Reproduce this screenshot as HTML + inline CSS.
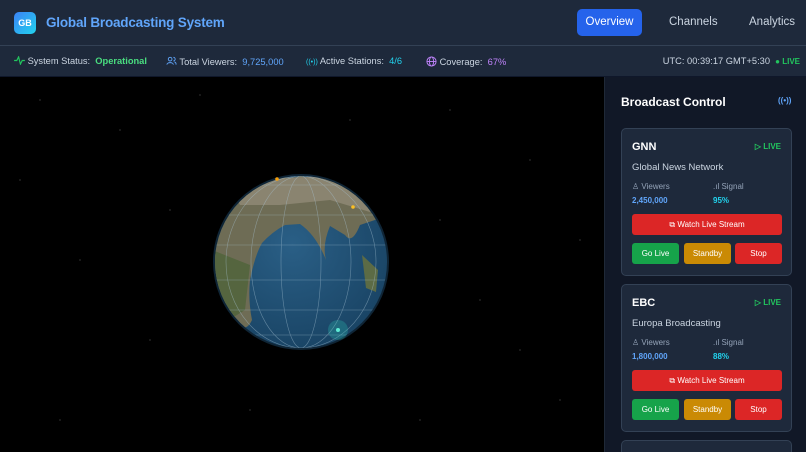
<!DOCTYPE html>
<html><head><meta charset="utf-8"><style>
*{margin:0;padding:0;box-sizing:border-box}
html,body{width:806px;height:452px;overflow:hidden}
body{background:#000;font-family:"Liberation Sans",sans-serif;color:#e5e7eb;position:relative}
.hdr{position:absolute;left:0;top:0;width:806px;height:46px;background:#1e293b;border-bottom:1px solid #334155}
.logo{position:absolute;left:14px;top:12px;width:22px;height:22px;border-radius:5px;background:linear-gradient(135deg,#3b82f6,#22d3ee);color:#fff;font-size:9px;font-weight:bold;text-align:center;line-height:22px}
.title{position:absolute;left:46px;top:15px;font-size:13.5px;font-weight:bold;color:#60a5fa;letter-spacing:-0.2px}
.tab{position:absolute;top:9px;height:27px;line-height:27px;font-size:11.5px;color:#cbd5e1}
.stat{position:absolute;left:0;top:46px;width:806px;height:31px;background:#1e293b;border-bottom:1px solid #0f172a;font-size:9.3px;color:#cbd5e1}
.stat span.i{position:absolute;top:10px;white-space:nowrap}
.main{position:absolute;left:0;top:77px;width:604px;height:375px;background:#000;overflow:hidden}
.side{position:absolute;left:604px;top:77px;width:202px;height:375px;background:#111827;border-left:1px solid #1f2937;overflow:hidden}
.card{position:absolute;left:16px;width:171px;height:148px;background:#1e293b;border:1px solid #334155;border-radius:5px}
.card .n{position:absolute;left:10px;top:12px;font-size:11px;font-weight:bold;color:#fff}
.card .live{position:absolute;right:10px;top:13px;font-size:8px;font-weight:bold;color:#22c55e}
.card .full{position:absolute;left:10px;top:33px;font-size:9.5px;color:#cbd5e1}
.card .lab{position:absolute;top:53px;font-size:8px;color:#94a3b8}
.card .val{position:absolute;top:67px;font-size:8px;font-weight:bold}
.btn{position:absolute;height:21px;border-radius:3px;font-size:8px;color:#fff;text-align:center;line-height:21px}
</style></head><body>
<div class="hdr">
<div class="logo">GB</div>
<div class="title">Global Broadcasting System</div>
<div class="tab" style="left:577px;width:65px;background:#2563eb;color:#fff;border-radius:5px;text-align:center">Overview</div>
<div class="tab" style="left:669px">Channels</div>
<div class="tab" style="left:749px">Analytics</div>
</div>
<div class="stat">
<span class="i" style="left:14px"><svg width="11" height="9" viewBox="0 0 12 10" style="vertical-align:-1px"><path d="M0 5h3l2-4 2 8 2-4h3" fill="none" stroke="#22c55e" stroke-width="1.3"/></svg> System Status: &nbsp;<b style="color:#4ade80">Operational</b></span>
<span class="i" style="left:166px"><svg width="11" height="10" viewBox="0 0 12 10" style="vertical-align:-1px"><circle cx="4.5" cy="3" r="2" fill="none" stroke="#60a5fa"/><path d="M1 9c0-3 7-3 7 0M8 1a2 2 0 010 4M9 6c2 0 2 2 2 3" fill="none" stroke="#60a5fa"/></svg> Total Viewers: &nbsp;<span style="color:#60a5fa">9,725,000</span></span>
<span class="i" style="left:306px"><span style="color:#22d3ee;font-size:7px">((•))</span> Active Stations: &nbsp;<span style="color:#22d3ee">4/6</span></span>
<span class="i" style="left:426px"><svg width="11" height="11" viewBox="0 0 12 12" style="vertical-align:-2px"><circle cx="6" cy="6" r="5" fill="none" stroke="#c084fc"/><ellipse cx="6" cy="6" rx="2.3" ry="5" fill="none" stroke="#c084fc"/><path d="M1 6h10" stroke="#c084fc"/></svg> Coverage: &nbsp;<span style="color:#c084fc">67%</span></span>
<span class="i" style="right:6px">UTC: 00:39:17 GMT+5:30 &nbsp;<span style="color:#22c55e;font-size:8px;font-weight:bold">● LIVE</span></span>
</div>
<div class="main">
<svg width="604" height="375" viewBox="0 77 604 375">
<g fill="#555">
<circle cx="40" cy="100" r=".6"/><circle cx="120" cy="130" r=".6"/><circle cx="200" cy="95" r=".6"/><circle cx="450" cy="110" r=".6"/><circle cx="530" cy="160" r=".6"/><circle cx="80" cy="260" r=".6"/><circle cx="150" cy="340" r=".6"/><circle cx="480" cy="300" r=".6"/><circle cx="560" cy="400" r=".6"/><circle cx="60" cy="420" r=".6"/><circle cx="420" cy="420" r=".6"/><circle cx="250" cy="410" r=".6"/><circle cx="350" cy="120" r=".6"/><circle cx="580" cy="240" r=".6"/><circle cx="20" cy="180" r=".6"/><circle cx="170" cy="210" r=".6"/><circle cx="440" cy="220" r=".6"/><circle cx="520" cy="350" r=".6"/>
</g>
<defs><radialGradient id="g" cx="45%" cy="40%" r="60%"><stop offset="0" stop-color="#2a5f86"/><stop offset="1" stop-color="#1a4566"/></radialGradient>
<clipPath id="c"><circle cx="301" cy="262" r="86"/></clipPath></defs>
<circle cx="301" cy="262" r="88" fill="#1e4a6b" opacity=".5"/>
<circle cx="301" cy="262" r="86" fill="url(#g)"/>
<g clip-path="url(#c)">
<path d="M210 200 L300 176 L390 190 L390 215 L360 225 Q352 245 345 235 L330 226 Q322 245 326 260 Q316 235 300 224 L285 225 Q272 232 262 243 Q255 255 250 280 Q248 300 252 320 Q245 335 235 320 L212 290 Z" fill="#6e6c55"/>
<path d="M225 180 L330 176 Q370 180 390 200 L370 212 L330 200 L280 205 L240 205 Z" fill="#8a8470"/>
<path d="M212 250 L250 265 L245 310 L232 318 L212 290 Z" fill="#55653f"/>
<path d="M362 255 L378 270 L376 292 L366 288 Z" fill="#5c6b45"/>
<g fill="none" stroke="#a9c4d4" stroke-width=".6" opacity=".5">
<ellipse cx="301" cy="262" rx="20" ry="86"/><ellipse cx="301" cy="262" rx="50" ry="86"/><ellipse cx="301" cy="262" rx="75" ry="86"/>
<path d="M215 245H387M217 215H385M228 185H374M215 280H387M218 310H384M232 335H370"/>
</g></g>
<circle cx="338" cy="330" r="10" fill="#2dd4bf" opacity=".25"/>
<circle cx="338" cy="330" r="2" fill="#5eead4"/>
<circle cx="277" cy="179" r="1.8" fill="#f59e0b"/>
<circle cx="353" cy="207" r="1.8" fill="#fbbf24"/>
</svg>
</div>
<div class="side">
<div style="position:absolute;left:16px;top:18px;font-size:12px;font-weight:bold;color:#fff">Broadcast Control</div>
<div style="position:absolute;left:173px;top:19px;font-size:8px;color:#60a5fa;font-weight:bold">((•))</div>
<div class="card" style="top:51px">
<div class="n">GNN</div><div class="live">▷ LIVE</div>
<div class="full">Global News Network</div>
<div class="lab" style="left:10px">♙ Viewers</div><div class="lab" style="left:91px">.ıl Signal</div>
<div class="val" style="left:10px;color:#60a5fa">2,450,000</div><div class="val" style="left:91px;color:#22d3ee">95%</div>
<div class="btn" style="left:10px;top:85px;width:150px;background:#dc2626">⧉ Watch Live Stream</div>
<div class="btn" style="left:10px;top:114px;width:47px;background:#16a34a">Go Live</div>
<div class="btn" style="left:62px;top:114px;width:47px;background:#ca8a04">Standby</div>
<div class="btn" style="left:113px;top:114px;width:47px;background:#dc2626">Stop</div>
</div>
<div class="card" style="top:207px">
<div class="n">EBC</div><div class="live">▷ LIVE</div>
<div class="full">Europa Broadcasting</div>
<div class="lab" style="left:10px">♙ Viewers</div><div class="lab" style="left:91px">.ıl Signal</div>
<div class="val" style="left:10px;color:#60a5fa">1,800,000</div><div class="val" style="left:91px;color:#22d3ee">88%</div>
<div class="btn" style="left:10px;top:85px;width:150px;background:#dc2626">⧉ Watch Live Stream</div>
<div class="btn" style="left:10px;top:114px;width:47px;background:#16a34a">Go Live</div>
<div class="btn" style="left:62px;top:114px;width:47px;background:#ca8a04">Standby</div>
<div class="btn" style="left:113px;top:114px;width:47px;background:#dc2626">Stop</div>
</div>
<div class="card" style="top:363px;height:12px;border-bottom:none;border-radius:5px 5px 0 0"></div>
</div>
</body></html>
